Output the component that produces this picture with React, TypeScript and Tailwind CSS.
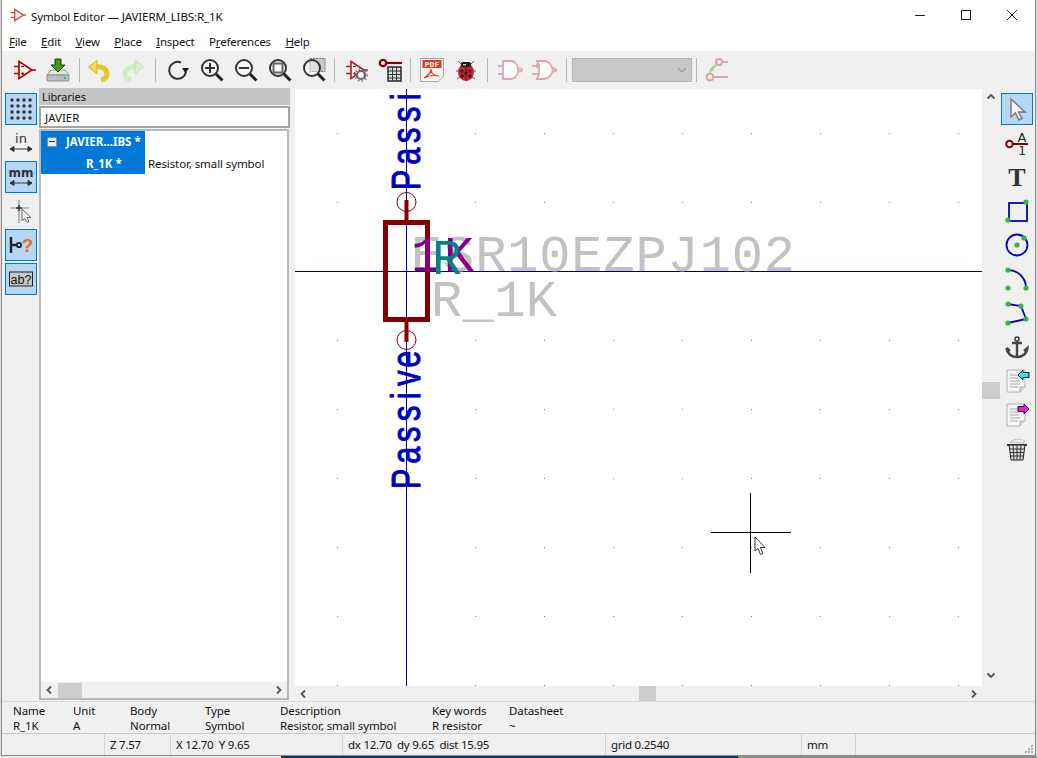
import type { ReactNode } from 'react';

const DARK_RED = '#840000';
const PALE_RED = '#d8a8a8';

function Ico({ children, size = 24 }: { children: ReactNode; size?: number }) {
  return (
    <svg width={size} height={size} viewBox="0 0 24 24" fill="none" className="overflow-visible">
      {children}
    </svg>
  );
}

function Amp({ color = '#a80000' }: { color?: string }) {
  return (
    <g stroke={color} strokeWidth="1.6">
      <path d="M7 3.5 L20 12 L7 20.5 Z" fill="#fff6f0" />
      <path d="M2 8.5H7M2 15.5H7M20 12H24" />
      <path d="M9 8.5H12M9 15.5H12M10.5 14V17" strokeWidth="1.2" />
    </g>
  );
}

function Magnifier({ children }: { children?: ReactNode }) {
  return (
    <>
      <circle cx="10" cy="10" r="8" stroke="#333" strokeWidth="2" fill="#fff" fillOpacity="0.4" />
      <path d="M16 16L22.5 22.5" stroke="#222" strokeWidth="3" />
      {children}
    </>
  );
}

function Gate({ or }: { or?: boolean }) {
  return (
    <g stroke={PALE_RED} strokeWidth="1.8" fill="#fff">
      {or ? <path d="M5 3 H12 C17 3 20 8 21 12 C20 16 17 21 12 21 H5 C8 16 8 8 5 3 Z" /> : <path d="M5 3 H12 C18 3 20 8 20 12 C20 16 18 21 12 21 H5 Z" />}
      <path d="M0 8H6M0 16H6M23 12H25" fill="none" />
      <circle cx="22" cy="12" r="1.6" />
      {or && <circle cx="6" cy="8" r="1.4" />}
    </g>
  );
}

function Page({ arrow }: { arrow: ReactNode }) {
  return (
    <>
      <path d="M2 1H20V18L15 23H2Z" fill="#f6f6f6" stroke="#b0b0b0" />
      <path d="M15 23V18H20" fill="#ddd" stroke="#b0b0b0" />
      <path d="M5 6H13M5 9H13M5 12H15M5 15H15M5 18H13" stroke="#a8a8a8" />
      {arrow}
    </>
  );
}

const topTools: { key: string; icon: ReactNode; after?: string }[] = [
  { key: 'symbol', icon: <Ico><Amp /></Ico> },
  {
    key: 'save',
    icon: (
      <Ico>
        <path d="M5 12H19L23 17H1Z" fill="#e4e4e4" stroke="#9a9a9a" />
        <rect x="1" y="17" width="22" height="6" rx="1" fill="#bdbdbd" stroke="#8c8c8c" />
        <rect x="18" y="19" width="2" height="2" fill="#22c55e" />
        <path d="M9 1H15V7H19L12 14L5 7H9Z" fill="#3f9a12" stroke="#14420a" />
      </Ico>
    ),
    after: 'ml-[4px] mr-[2px]',
  },
  {
    key: 'undo',
    icon: (
      <Ico>
        <path d="M8 9C15 8 20 11 20 16C20 19 18 21 14 22" stroke="#e8c52c" strokeWidth="5" />
        <path d="M1.5 9L10 2V16Z" fill="#f3d95a" stroke="#d8b62a" />
      </Ico>
    ),
  },
  {
    key: 'redo',
    icon: (
      <Ico>
        <path d="M16 9C9 8 4 11 4 16C4 19 6 21 10 22" stroke="#cdeec0" strokeWidth="5" />
        <path d="M22.5 9L14 2V16Z" fill="#d6f2ca" stroke="#bde3ad" />
      </Ico>
    ),
    after: 'ml-[5px] mr-[5px]',
  },
  {
    key: 'rotate',
    icon: (
      <Ico>
        <path d="M20 14A8.5 8.5 0 1 1 15 4.5" stroke="#333" strokeWidth="2" />
        <path d="M16 11H23L19.5 16.5Z" fill="#222" transform="translate(0 -1)" />
      </Ico>
    ),
  },
  { key: 'zoom-in', icon: <Ico><Magnifier><path d="M5 10H15M10 5V15" stroke="#333" strokeWidth="2" /></Magnifier></Ico> },
  { key: 'zoom-out', icon: <Ico><Magnifier><path d="M5 10H15" stroke="#333" strokeWidth="2" /></Magnifier></Ico> },
  { key: 'zoom-fit', icon: <Ico><Magnifier><rect x="5.5" y="5.5" width="9" height="9" stroke="#666" strokeWidth="2" /></Magnifier></Ico> },
  {
    key: 'zoom-area',
    icon: (
      <Ico>
        <rect x="8" y="0.5" width="15" height="13" fill="#c8c8c8" stroke="#777" strokeDasharray="2 1" />
        <Magnifier />
      </Ico>
    ),
    after: 'ml-[3px] mr-[4px]',
  },
  {
    key: 'sym-gear',
    icon: (
      <Ico>
        <Amp color="#b02020" />
        <circle cx="17" cy="17" r="4" stroke="#666" strokeWidth="2.2" fill="#fff" />
        <circle cx="17" cy="17" r="6" stroke="#777" strokeWidth="1.6" strokeDasharray="1.6 2" />
      </Ico>
    ),
  },
  {
    key: 'pin-table',
    icon: (
      <Ico>
        <circle cx="5" cy="5" r="3.2" stroke={DARK_RED} strokeWidth="2.2" />
        <path d="M8 5H24" stroke={DARK_RED} strokeWidth="2.2" />
        <rect x="10" y="9" width="13" height="14" fill="#ddd" stroke="#333" strokeWidth="1.6" />
        <path d="M10 13H23M10 16.5H23M10 20H23M14.5 9V23M18.5 9V23" stroke="#333" />
      </Ico>
    ),
    after: 'ml-[3px] mr-[4px]',
  },
  {
    key: 'pdf',
    icon: (
      <Ico>
        <path d="M0.5 0.5H23.5V18L18 23.5H0.5Z" fill="#f4f4f4" stroke="#a8a8a8" />
        <rect x="2.5" y="2" width="19" height="8" fill="#e8341c" />
        <text x="12" y="9" textAnchor="middle" fontSize="8" fill="#fff" fontFamily="'Liberation Mono', monospace" fontWeight="700">PDF</text>
        <path d="M4 20C9 17 11 13 11 11C11 15 14 18 19 18C14 17 8 18 4 20Z" stroke="#e8341c" strokeWidth="1.2" />
      </Ico>
    ),
  },
  {
    key: 'bug',
    icon: (
      <Ico>
        <path d="M4 3L8 7M20 3L16 7M2 13H6M22 13H18M3 21L7 18M21 21L17 18" stroke="#555" />
        <ellipse cx="12" cy="14" rx="8" ry="9" fill="#c6242a" />
        <rect x="7" y="4" width="10" height="5" rx="2" fill="#1c1c1c" />
        <rect x="9" y="6" width="3" height="1.5" fill="#e8d23c" />
        <path d="M12 9V23" stroke="#5a1010" />
        <g fill="#241010">
          <circle cx="8" cy="13" r="1.6" />
          <circle cx="16" cy="13" r="1.6" />
          <circle cx="8" cy="18" r="1.6" />
          <circle cx="16" cy="18" r="1.6" />
          <circle cx="12" cy="15" r="1.4" />
        </g>
      </Ico>
    ),
    after: 'ml-[4px] mr-[5px]',
  },
  { key: 'nand', icon: <Ico><Gate /></Ico> },
  { key: 'or', icon: <Ico><Gate or /></Ico> },
];

const leftTools: { key: string; on?: boolean; icon: ReactNode }[] = [
  {
    key: 'grid',
    on: true,
    icon: (
      <Ico>
        {[3, 9, 15, 21].flatMap((y) =>
          [3, 9, 15, 21].map((x) => <circle key={`${x}-${y}`} cx={x} cy={y} r="1.7" fill="#333" />),
        )}
      </Ico>
    ),
  },
  {
    key: 'in',
    icon: (
      <Ico>
        <text x="12" y="12" textAnchor="middle" fontSize="13" fill="#333" fontFamily="'DejaVu Sans', sans-serif">in</text>
        <path d="M1 18H23M1 18L5 15.5V20.5ZM23 18L19 15.5V20.5Z" stroke="#333" fill="#333" />
      </Ico>
    ),
  },
  {
    key: 'mm',
    on: true,
    icon: (
      <Ico>
        <text x="12" y="12" textAnchor="middle" fontSize="12" fill="#333" fontWeight="700" fontFamily="'DejaVu Sans', sans-serif">mm</text>
        <path d="M1 18H23M1 18L5 15.5V20.5ZM23 18L19 15.5V20.5Z" stroke="#333" fill="#333" />
      </Ico>
    ),
  },
  {
    key: 'cursor',
    icon: (
      <Ico>
        <path d="M1 9H20M10 1V24" stroke="#aaa" strokeWidth="1.6" />
        <path d="M7 9H13M10 6V12" stroke="#333" strokeWidth="1.6" />
        <path d="M13 10V22L15.5 19.5L18 23.5L20 22.5L18 18.5H22Z" fill="#f4f4f4" stroke="#666" />
      </Ico>
    ),
  },
  {
    key: 'pin',
    on: true,
    icon: (
      <Ico>
        <path d="M2 4V20M2 12H8" stroke="#222" strokeWidth="2.4" />
        <circle cx="10" cy="12" r="2.2" stroke="#222" strokeWidth="1.8" />
        <text x="18.5" y="19" textAnchor="middle" fontSize="19" fill="#f06a14" fontFamily="'Liberation Sans', sans-serif" fontWeight="700">?</text>
      </Ico>
    ),
  },
  {
    key: 'ab',
    on: true,
    icon: (
      <Ico>
        <rect x="0.5" y="5" width="23" height="14" fill="#c8c8c8" stroke="#222" />
        <text x="12" y="16.5" textAnchor="middle" fontSize="12.5" fill="#111" fontFamily="'Liberation Sans', sans-serif">ab?</text>
      </Ico>
    ),
  },
];

const rightTools: { key: string; on?: boolean; icon: ReactNode }[] = [
  {
    key: 'select',
    on: true,
    icon: <Ico><path d="M6 2V20L10.5 16L14 23L17 21.5L13.5 15H20Z" fill="#f4f4f4" stroke="#777" strokeWidth="1.4" /></Ico>,
  },
  {
    key: 'pin',
    icon: (
      <Ico>
        <circle cx="4.5" cy="13" r="3.2" stroke={DARK_RED} strokeWidth="2" fill="#fff" />
        <path d="M8 13H23" stroke={DARK_RED} strokeWidth="2" />
        <text x="17" y="11" textAnchor="middle" fontSize="13" fill="#222" fontFamily="'DejaVu Sans', sans-serif">A</text>
        <text x="17" y="23.5" textAnchor="middle" fontSize="12" fill="#222" fontFamily="'DejaVu Sans', sans-serif">1</text>
      </Ico>
    ),
  },
  {
    key: 'text',
    icon: (
      <Ico>
        <text x="12" y="21" textAnchor="middle" fontSize="26" fontWeight="700" fill="#333" fontFamily="'Liberation Serif', serif">T</text>
      </Ico>
    ),
  },
  {
    key: 'rect',
    icon: (
      <Ico>
        <rect x="4" y="4" width="18" height="18" stroke="#0000c8" strokeWidth="1.8" />
        <circle cx="21" cy="3" r="2.6" fill="#3fae49" />
        <circle cx="3" cy="21" r="2.6" fill="#3fae49" />
      </Ico>
    ),
  },
  {
    key: 'circle',
    icon: (
      <Ico>
        <circle cx="12" cy="12" r="10.5" stroke="#0000c8" strokeWidth="1.8" />
        <circle cx="12" cy="12" r="2.6" fill="#3fae49" />
        <circle cx="19" cy="5" r="2.6" fill="#3fae49" />
      </Ico>
    ),
  },
  {
    key: 'arc',
    icon: (
      <Ico>
        <path d="M3 3C13 3 21 11 21 21" stroke="#0000c8" strokeWidth="1.8" />
        <circle cx="3" cy="3" r="2.6" fill="#3fae49" />
        <circle cx="21" cy="21" r="2.6" fill="#3fae49" />
        <circle cx="3" cy="21" r="2.6" fill="#3fae49" />
      </Ico>
    ),
  },
  {
    key: 'poly',
    icon: (
      <Ico>
        <path d="M3 3L16 5L21 18L3 22" stroke="#0000c8" strokeWidth="1.8" />
        <circle cx="3" cy="3" r="2.6" fill="#3fae49" />
        <circle cx="16" cy="5" r="2.6" fill="#3fae49" />
        <circle cx="21" cy="18" r="2.6" fill="#3fae49" />
        <circle cx="3" cy="22" r="2.6" fill="#3fae49" />
      </Ico>
    ),
  },
  {
    key: 'anchor',
    icon: (
      <Ico>
        <circle cx="12" cy="4" r="2" stroke="#444" strokeWidth="1.6" />
        <path d="M7 8H17M12 6V22" stroke="#444" strokeWidth="2.4" />
        <path d="M1.5 13C2 19 7 22 12 22C17 22 22 19 22.5 13L19 16M1.5 13L5 16" stroke="#444" strokeWidth="2.4" />
      </Ico>
    ),
  },
  {
    key: 'import',
    icon: <Ico><Page arrow={<path d="M13 6L18 1V3.5H24V8.5H18V11Z" fill="#22e6f0" stroke="#111" />} /></Ico>,
  },
  {
    key: 'export',
    icon: <Ico><Page arrow={<path d="M13 3.5H19V1L24 6L19 11V8.5H13Z" fill="#f414e4" stroke="#111" />} /></Ico>,
  },
  {
    key: 'trash',
    icon: (
      <Ico>
        <path d="M5 5C8 2 12 3 14 2C17 2 20 3 19 6Z" fill="#f0f0f0" stroke="#bbb" />
        <path d="M2 8H22" stroke="#222" strokeWidth="1.8" />
        <path d="M4 8L6 23H18L20 8Z" fill="#ddd" stroke="#222" />
        <path d="M8 8L9 23M12 8V23M16 8L15 23M5 12H19M5 15.5H19M6 19H18" stroke="#333" />
      </Ico>
    ),
  },
];

function ToolBtn({ on, icon }: { on?: boolean; icon: ReactNode }) {
  return (
    <div className={`w-[32px] h-[32px] flex items-center justify-center border ${on ? 'border-[#0078d7] bg-[#b5d7f3]' : 'border-transparent'}`}>
      {icon}
    </div>
  );
}

function Chevron({ dir }: { dir: 'left' | 'right' | 'up' | 'down' }) {
  const d = {
    left: 'M6 1.5L2.5 5L6 8.5',
    right: 'M4 1.5L7.5 5L4 8.5',
    up: 'M1.5 6.5L5 3L8.5 6.5',
    down: 'M1.5 3.5L5 7L8.5 3.5',
  }[dir];
  return (
    <svg width="10" height="10" viewBox="0 0 10 10" fill="none" className="shrink-0">
      <path d={d} stroke="#555" strokeWidth="1.8" />
    </svg>
  );
}

const msgColumns = [
  { w: 'w-[60px]', top: 'Name', bottom: 'R_1K' },
  { w: 'w-[57px]', top: 'Unit', bottom: 'A' },
  { w: 'w-[75px]', top: 'Body', bottom: 'Normal' },
  { w: 'w-[75px]', top: 'Type', bottom: 'Symbol' },
  { w: 'w-[152px]', top: 'Description', bottom: 'Resistor, small symbol' },
  { w: 'w-[77px]', top: 'Key words', bottom: 'R resistor' },
  { w: 'w-[80px]', top: 'Datasheet', bottom: '~' },
];

const statusCells = [
  { w: 'w-[103px]', label: '' },
  { w: 'w-[66px]', label: 'Z 7.57' },
  { w: 'w-[172px]', label: 'X 12.70  Y 9.65' },
  { w: 'w-[263px]', label: 'dx 12.70  dy 9.65  dist 15.95' },
  { w: 'w-[196px]', label: 'grid 0.2540' },
  { w: 'w-[54px]', label: 'mm' },
];

const menus: [string, string, string][] = [
  ['', 'F', 'ile'],
  ['', 'E', 'dit'],
  ['', 'V', 'iew'],
  ['', 'P', 'lace'],
  ['', 'I', 'nspect'],
  ['P', 'r', 'eferences'],
  ['', 'H', 'elp'],
];

export default function App() {
  return (
    <div className="w-[1037px] h-[758px] overflow-hidden flex flex-col bg-[#dcdcdc] text-[11.5px] leading-[15px] text-[#111] font-['Noto_Sans',sans-serif]">
      <div className="flex-1 min-h-0 ml-[1px] mr-[1px] flex flex-col bg-[#f0f0f0] border-l border-r border-b border-[#8a8a8a]">
        {/* Title bar */}
        <div className="h-[30px] bg-white flex items-center shrink-0">
          <div className="ml-[8px] w-[16px] h-[16px]">
            <svg width="16" height="16" viewBox="0 0 24 24" fill="none">
              <path d="M7 3.5L20 12L7 20.5Z" stroke="#c05050" strokeWidth="2" fill="#fbeee8" />
              <path d="M1 8.5H7M1 15.5H7M20 12H24" stroke="#c05050" strokeWidth="2" />
            </svg>
          </div>
          <span className="ml-[5px] pt-[3px] tracking-[-0.12px]">Symbol Editor — JAVIERM_LIBS:R_1K</span>
          <div className="ml-auto flex">
            <div className="w-[46px] h-[30px] flex items-center justify-center">
              <svg width="10" height="10" viewBox="0 0 10 10"><path d="M0 5.5H10" stroke="#222" /></svg>
            </div>
            <div className="w-[46px] h-[30px] flex items-center justify-center">
              <svg width="10" height="10" viewBox="0 0 10 10" fill="none"><rect x="0.5" y="0.5" width="9" height="9" stroke="#222" /></svg>
            </div>
            <div className="w-[46px] h-[30px] flex items-center justify-center">
              <svg width="10" height="10" viewBox="0 0 10 10"><path d="M0 0L10 10M10 0L0 10" stroke="#222" /></svg>
            </div>
          </div>
        </div>

        {/* Menu bar */}
        <div className="h-[21px] bg-white flex items-center shrink-0 pl-[7px] pt-[1px] gap-[14.5px] tracking-[-0.2px]">
          {menus.map(([pre, u, rest]) => (
            <span key={pre + u + rest}>
              {pre}
              <span className="underline">{u}</span>
              {rest}
            </span>
          ))}
        </div>

        {/* Main toolbar */}
        <div className="h-[36px] shrink-0 flex items-center pl-[5px] pt-[2px]">
          {topTools.map((t) => (
            <div key={t.key} className="flex items-center">
              <div className="w-[34px] flex justify-center">{t.icon}</div>
              {t.after && <div className={`w-px h-[24px] bg-[#b4b4b4] ${t.after}`} />}
            </div>
          ))}
          <div className="w-px h-[24px] bg-[#b4b4b4] ml-[5px]" />
          <div className="ml-[5px] w-[120px] h-[24px] bg-[#c8c8c8] border border-[#b4b4b4] flex items-center justify-end pr-[3px]">
            <svg width="12" height="10" viewBox="0 0 12 10" fill="none"><path d="M2 3L6 7L10 3" stroke="#9c9c9c" strokeWidth="1.2" /></svg>
          </div>
          <div className="w-px h-[24px] bg-[#b4b4b4] ml-[4px]" />
          <div className="w-[39px] flex justify-center">
            <Ico>
              <circle cx="14" cy="4" r="3" stroke={PALE_RED} strokeWidth="2.2" />
              <circle cx="5" cy="19" r="3.4" stroke={PALE_RED} strokeWidth="2.2" />
              <path d="M17 4H23M9 19H23" stroke={PALE_RED} strokeWidth="2.2" />
              <path d="M12 6C7 8 4 11 4 15L8 13C9 10 11 8 13 7Z" fill="#9fd68e" />
            </Ico>
          </div>
        </div>

        {/* Body */}
        <div className="flex-1 min-h-0 flex">
          {/* Left toolbar */}
          <div className="w-[36px] shrink-0 flex flex-col items-center gap-[2px] pt-[6px] pl-[2px]">
            {leftTools.map((t) => (
              <ToolBtn key={t.key} on={t.on} icon={t.icon} />
            ))}
          </div>

          {/* Libraries panel */}
          <div className="w-[254px] shrink-0 flex flex-col pt-[1px] pb-[1px] pl-[1px] pr-[2px]">
            <div className="h-[17px] bg-[#c4c4c4] pl-[3px] pb-[1px] flex items-center text-[11px] tracking-[-0.1px] shrink-0">Libraries</div>
            <div className="h-[22px] mt-[1px] bg-white border-2 border-[#a4a4a4] pl-[4px] flex items-center shrink-0">JAVIER</div>
            <div className="flex-1 min-h-0 mr-[1px] mt-[1px] bg-white border-2 border-[#b8b8b8] flex flex-col">
              <div className="flex-1 min-h-0 relative">
                <div className="w-[104px] h-[43px] bg-[#0078d7] text-white font-bold">
                  <div className="h-[21px] flex items-center">
                    <span className="ml-[6px] w-[10px] h-[10px] bg-[#e8e8e8] border border-[#8a8a8a] flex items-center justify-center">
                      <span className="w-[6px] h-px bg-[#333]" />
                    </span>
                    <span className="ml-[9px] whitespace-nowrap">JAVIER...IBS *</span>
                  </div>
                  <div className="h-[22px] flex items-center pl-[45px] whitespace-nowrap">R_1K *</div>
                </div>
                <span className="absolute left-[107px] top-[25px] whitespace-nowrap tracking-[-0.1px]">Resistor, small symbol</span>
              </div>
              <div className="h-[16px] bg-[#f0f0f0] flex items-center px-[4px] shrink-0">
                <Chevron dir="left" />
                <div className="ml-[3px] w-[24px] h-[15px] bg-[#cdcdcd]" />
                <div className="flex-1" />
                <Chevron dir="right" />
              </div>
            </div>
          </div>

          {/* Sash */}
          <div className="w-[3px] shrink-0" />

          {/* Canvas with scrollbars */}
          <div className="flex-1 min-w-0 flex flex-col pt-[2px]">
            <div className="flex-1 min-h-0 flex">
              <svg width="687" height="597" viewBox="295 89 687 597" className="shrink-0 bg-white block">
                <defs>
                  <pattern id="dots" x="337" y="133" width="69" height="69" patternUnits="userSpaceOnUse">
                    <rect width="1" height="1" fill="#7c7c7c" />
                  </pattern>
                </defs>
                <rect x="295" y="89" width="687" height="597" fill="url(#dots)" />
                <path d="M295 271.5H982" stroke="#000070" />
                <path d="M406.5 89V686" stroke="#0000a8" />

                <g fontFamily="'Liberation Mono', monospace" fill="#c2c2c2">
                  <text x="411" y="271" fontSize="52" textLength="384" lengthAdjust="spacing">ESR10EZPJ102</text>
                  <text x="431" y="316" fontSize="52" textLength="126" lengthAdjust="spacing">R_1K</text>
                </g>

                <rect x="385.5" y="222.5" width="42" height="97" fill="none" stroke={DARK_RED} strokeWidth="5" />
                <path d="M406.5 200V221M406.5 321V342" stroke={DARK_RED} strokeWidth="4" />
                <circle cx="406.5" cy="202" r="9.5" fill="none" stroke={DARK_RED} />
                <circle cx="406.5" cy="340" r="9.5" fill="none" stroke={DARK_RED} />

                <g fontFamily="'Liberation Mono', monospace" fontSize="50">
                  <text x="411 444" y="271" fill="#840084">1K</text>
                  <text x="432" y="274" fill="#008484">R</text>
                </g>

                <g fontFamily="'Liberation Sans', sans-serif" fontSize="41" fill="#0000c2" stroke="#0000c2" strokeWidth="1">
                  <text transform="translate(419.5 487) rotate(-90) scale(0.75 1)" x="-3 31 60 88 117 135 159" y="0">Passive</text>
                  <text transform="translate(419.5 188) rotate(-90) scale(0.75 1)" x="-3 31 60 88 117" y="0">Passi</text>
                </g>

                <path d="M711 532.5H791M750.5 493V573" stroke="#000" />
                <path d="M755 537V551L758 548.5L760.5 554.5L763 553.5L760.5 547.5H765Z" fill="#fff" stroke="#333" />
              </svg>
              <div className="w-[18px] shrink-0 flex flex-col items-center pt-[3px] pb-[6px]">
                <Chevron dir="up" />
                <div className="mt-[280px] w-full h-[17px] bg-[#cdcdcd]" />
                <div className="flex-1" />
                <Chevron dir="down" />
              </div>
            </div>
            <div className="h-[15px] shrink-0 flex items-center pl-[4px] pr-[22px]">
              <Chevron dir="left" />
              <div className="ml-[330px] w-[17px] h-[15px] bg-[#cdcdcd]" />
              <div className="flex-1" />
              <Chevron dir="right" />
            </div>
          </div>

          {/* Right toolbar */}
          <div className="w-[35px] shrink-0 flex flex-col items-center gap-[2px] pt-[6px] pr-[1px]">
            {rightTools.map((t) => (
              <ToolBtn key={t.key} on={t.on} icon={t.icon} />
            ))}
          </div>
        </div>

        {/* Message panel */}
        <div className="h-[32px] shrink-0 flex pl-[11px] pt-[1px] border-t border-[#d8d8d8]">
          {msgColumns.map((c) => (
            <div key={c.top} className={`${c.w} shrink-0 tracking-[-0.1px]`}>
              <div>{c.top}</div>
              <div>{c.bottom}</div>
            </div>
          ))}
        </div>

        {/* Status bar */}
        <div className="h-[22px] shrink-0 flex border-t border-[#c8c8c8] relative">
          {statusCells.map((c, i) => (
            <div key={i} className={`${c.w} shrink-0 flex items-center pl-[5px] border-r border-[#d4d4d4] whitespace-pre tracking-[-0.25px]`}>
              {c.label}
            </div>
          ))}
          <svg width="10" height="10" viewBox="0 0 10 10" className="absolute right-[1px] bottom-[1px]">
            <g fill="#b0b0b0">
              <rect x="7" y="1" width="2" height="2" />
              <rect x="4" y="4" width="2" height="2" />
              <rect x="7" y="4" width="2" height="2" />
              <rect x="1" y="7" width="2" height="2" />
              <rect x="4" y="7" width="2" height="2" />
              <rect x="7" y="7" width="2" height="2" />
            </g>
          </svg>
        </div>
      </div>

      {/* Desktop strip below the window */}
      <div className="h-[2px] shrink-0 flex">
        <div className="w-[281px] bg-[#e8e8e8]" />
        <div className="w-[457px] bg-[#0a3a66]" />
        <div className="flex-1 bg-[#8c8c8c]" />
      </div>
    </div>
  );
}
